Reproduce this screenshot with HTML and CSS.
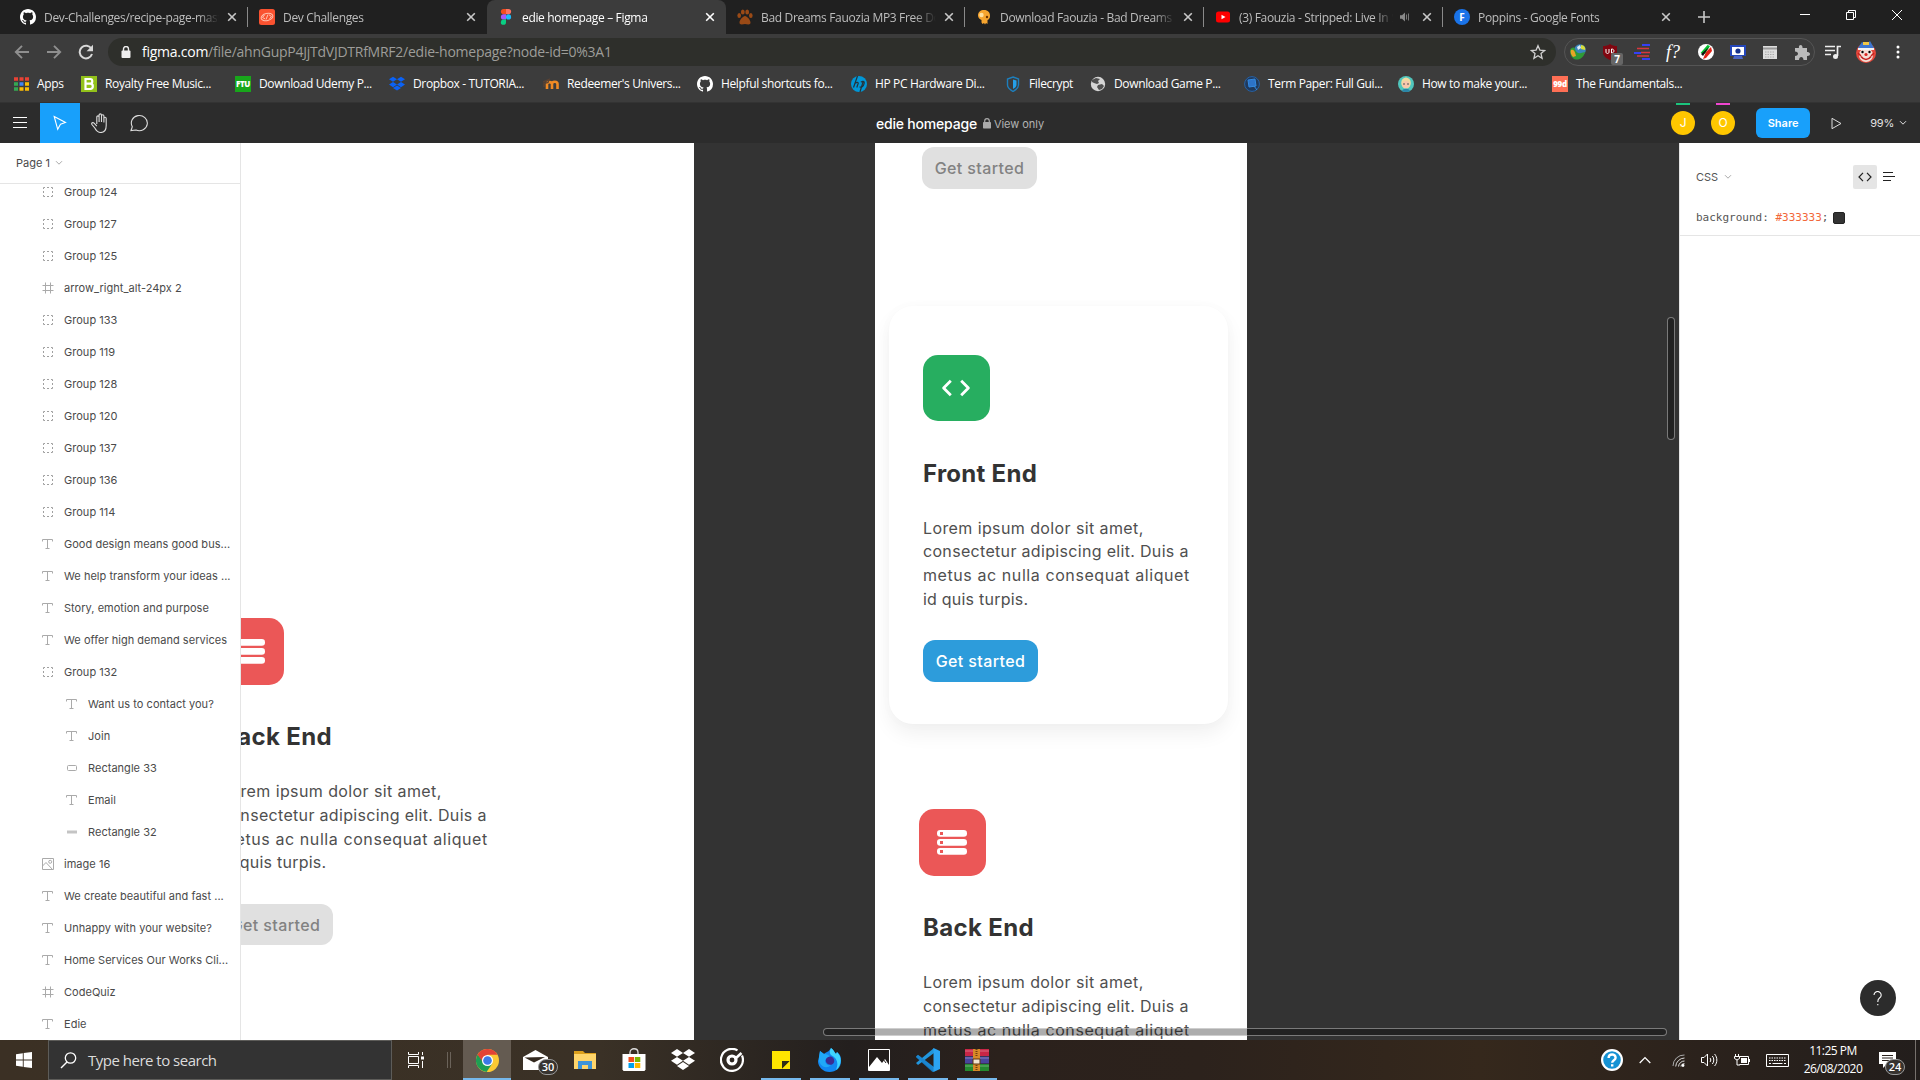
FILE: index.html
```html
<!DOCTYPE html>
<html lang="en">
<head>
<meta charset="utf-8">
<title>edie homepage – Figma</title>
<link rel="stylesheet" href="styles.css">
</head>
<body>
<svg class="defs" width="0" height="0" aria-hidden="true">
  <symbol id="x" viewBox="0 0 10 10"><path d="M1.2 1.2l7.6 7.6M8.8 1.2L1.2 8.8" fill="none" stroke="currentColor" stroke-width="1.6"/></symbol>
  <symbol id="github" viewBox="0 0 16 16"><path fill="#fff" d="M8 0C3.58 0 0 3.58 0 8c0 3.54 2.29 6.53 5.47 7.59.4.07.55-.17.55-.38v-1.49c-2.01.37-2.53-.49-2.69-.94-.09-.23-.48-.94-.82-1.13-.28-.15-.68-.52-.01-.53.63-.01 1.08.58 1.23.82.72 1.21 1.87.87 2.33.66.07-.52.28-.87.51-1.07-1.78-.2-3.64-.89-3.64-3.95 0-.87.31-1.59.82-2.15-.08-.2-.36-1.02.08-2.12 0 0 .67-.21 2.2.82.64-.18 1.32-.27 2-.27s1.36.09 2 .27c1.53-1.04 2.2-.82 2.2-.82.44 1.1.16 1.92.08 2.12.51.56.82 1.27.82 2.15 0 3.07-1.87 3.75-3.65 3.95.29.25.54.73.54 1.48v2.2c0 .21.15.46.55.38A8 8 0 0 0 16 8c0-4.42-3.58-8-8-8z"/></symbol>
  <symbol id="dropbox" viewBox="0 0 24 22"><path fill="currentColor" d="M6 0l6 3.9-6 3.9-6-3.9zM18 0l6 3.9-6 3.9-6-3.9zM6 7.9l6 3.9-6 3.9-6-3.9zM18 7.9l6 3.9-6 3.9-6-3.9zM6 17l6-3.9L18 17l-6 3.9z"/></symbol>
  <symbol id="group" viewBox="0 0 12 12"><path d="M1.500 3v-1.500h1.500M9 1.500h1.500v1.500M10.500 9v1.500h-1.500M3 10.500h-1.500v-1.500M5 1.500h2M5 10.500h2M1.500 5v2M10.500 5v2" fill="none" stroke="#a0a0a0"/></symbol>
  <symbol id="text" viewBox="0 0 12 12"><path d="M.5 3.500v-2h10v2M5.500 1.500v9M3.500 10.500h4" fill="none" stroke="#aaa"/></symbol>
  <symbol id="frame" viewBox="0 0 12 12"><path d="M3.500.5v11M8.500.5v11M.5 3.500h11M.5 8.500h11" fill="none" stroke="#aaa"/></symbol>
  <symbol id="rect" viewBox="0 0 12 12"><rect x="1.500" y="3.500" width="9" height="5" rx="1" fill="none" stroke="#aaa"/></symbol>
  <symbol id="bar" viewBox="0 0 12 12"><path d="M1 6h10" stroke="#c4c4c4" stroke-width="3"/></symbol>
  <symbol id="image" viewBox="0 0 12 12"><path d="M.5.500h11v11H.5zM.5 8l3.500-3.500 6.500 7" fill="none" stroke="#aaa"/><circle cx="8.200" cy="3.800" r="1.500" fill="none" stroke="#aaa"/></symbol>
  <symbol id="chev" viewBox="0 0 8 6"><path d="M1 1.200l3 3 3-3" fill="none" stroke="currentColor"/></symbol>
  <symbol id="server" viewBox="0 0 30 25"><g fill="#fff"><rect width="30" height="6.800" rx="3.200"/><rect y="9" width="30" height="6.800" rx="3.200"/><rect y="18" width="30" height="6.800" rx="3.200"/></g><path fill="#eb5757" d="M3 1.900h3v3H3zM3 10.900h3v3H3zM3 19.900h3v3H3z"/></symbol>
</svg>

<header class="tabs">
  <div class="tab"><svg class="fav"><use href="#github"/></svg><span class="tab-title">Dev-Challenges/recipe-page-master</span><svg class="close"><use href="#x"/></svg></div>
  <div class="tab sep"><svg class="fav" viewBox="0 0 16 16"><rect width="16" height="16" rx="2.500" fill="#fa5230"/><g fill="none" stroke="#ffc2b0"><ellipse cx="8" cy="8" rx="6" ry="3.600" transform="rotate(-14 8 8)"/><path d="M5.500 6L3.500 8.500l2.500 1.300M10 5.800l2.500 1.700-2 2.200M9 5.500l-2 5"/></g></svg><span class="tab-title">Dev Challenges</span><svg class="close"><use href="#x"/></svg></div>
  <div class="tab active"><svg class="fav" viewBox="0 0 16 16"><path d="M5.500 0H8v5.200H5.500a2.600 2.600 0 0 1 0-5.200z" fill="#f24e1e"/><path d="M8 0h2.500a2.600 2.600 0 0 1 0 5.200H8z" fill="#ff7262"/><path d="M5.500 5.300H8v5.200H5.500a2.600 2.600 0 0 1 0-5.200z" fill="#a259ff"/><circle cx="10.500" cy="7.900" r="2.600" fill="#1abcfe"/><path d="M5.500 10.600H8v2.600a2.600 2.600 0 1 1-2.500-2.600z" fill="#0acf83"/></svg><span class="tab-title">edie homepage – Figma</span><svg class="close"><use href="#x"/></svg></div>
  <div class="tab"><svg class="fav" viewBox="0 0 16 16" fill="#9a4a16"><ellipse cx="2.200" cy="6.500" rx="1.800" ry="2.500"/><ellipse cx="5.800" cy="3" rx="1.900" ry="2.600"/><ellipse cx="10.200" cy="3" rx="1.900" ry="2.600"/><ellipse cx="13.800" cy="6.500" rx="1.800" ry="2.500"/><path d="M8 7c2 0 5.500 4 5.500 6.500 0 3-3.500 1.500-5.500 1.500s-5.500 1.500-5.500-1.500C2.500 11 6 7 8 7z"/></svg><span class="tab-title">Bad Dreams Fauozia MP3 Free Download</span><svg class="close"><use href="#x"/></svg></div>
  <div class="tab sep"><svg class="fav" viewBox="0 0 16 16"><path d="M8 1c4 0 6 2.500 6 6 0 2-1 3.500-2.500 4V15l-1.500-1-1 1.500-1-1.500-1.500 1-1-1.500V11C3.500 10 2 9 2 6.500 2 3 4.500 1 8 1z" fill="#f7a52f"/><circle cx="5.500" cy="6" r="2.200" fill="#ffe0a0"/><circle cx="11" cy="8" r="1.200" fill="#6b3300"/></svg><span class="tab-title">Download Faouzia - Bad Dreams mp3</span><svg class="close"><use href="#x"/></svg></div>
  <div class="tab sep"><svg class="fav" viewBox="0 0 16 16"><rect x="1" y="2.500" width="14" height="11" rx="2.500" fill="#f00"/><path d="M6.500 5.700v4.600l4-2.300z" fill="#fff"/></svg><span class="tab-title">(3) Faouzia - Stripped: Live In Studio</span><svg class="audio" viewBox="0 0 10 10"><path d="M0 3.200h2L5 .5v9L2 6.800H0z" fill="#888"/><path d="M6.500 2.500v5M8.500 1.500v7" stroke="#777"/></svg><svg class="close"><use href="#x"/></svg></div>
  <div class="tab sep"><svg class="fav" viewBox="0 0 16 16"><circle cx="8" cy="8" r="8" fill="#1a73e8"/><text x="5.200" y="11.800" class="fav-f">F</text></svg><span class="tab-title">Poppins - Google Fonts</span><svg class="close"><use href="#x"/></svg></div>
  <svg class="plus" viewBox="0 0 12 12"><path d="M6 0v12M0 6h12" stroke="#c8c8c8" stroke-width="1.600"/></svg>
  <div class="window">
    <svg width="10" height="10"><path d="M0 4.500h10" stroke="#fff"/></svg>
    <svg width="10" height="10"><path d="M.5 2.500h7v7h-7zM2.500 2.500v-2h7v7h-2" fill="none" stroke="#fff"/></svg>
    <svg width="10" height="10"><path d="M0 0l10 10M10 0L0 10" stroke="#fff"/></svg>
  </div>
</header>

<div class="toolbar">
  <div class="nav">
    <svg viewBox="0 0 16 16" class="dim"><path d="M15 8H2M8 1.800L1.800 8 8 14.200" fill="none" stroke="currentColor" stroke-width="1.900"/></svg>
    <svg viewBox="0 0 16 16" class="dim"><path d="M1 8h13M8 1.800L14.200 8 8 14.200" fill="none" stroke="currentColor" stroke-width="1.900"/></svg>
    <svg viewBox="0 0 16 16"><path d="M13.500 5A6.300 6.300 0 1 0 14 10" fill="none" stroke="#d8d8d8" stroke-width="2"/><path d="M15 .8v6.400H8.600z" fill="#d8d8d8"/></svg>
  </div>
  <div class="address">
    <svg class="lock" viewBox="0 0 10 12"><rect x=".5" y="4.500" width="9" height="7.500" rx="1" fill="#eee"/><path d="M2.500 5V3a2.500 2.500 0 0 1 5 0v2" fill="none" stroke="#eee" stroke-width="1.400"/></svg>
    <span class="url"><b>figma.com</b>/file/ahnGupP4JjTdVJDTRfMRF2/edie-homepage?node-id=0%3A1</span>
    <svg class="star" viewBox="0 0 16 16"><path d="M8 1.700l1.900 4.400 4.700.4-3.600 3.100 1.100 4.700L8 11.800l-4.100 2.500L5 9.600 1.400 6.500l4.700-.4z" fill="none" stroke="#d0d0d0" stroke-width="1.300"/></svg>
  </div>
  <div class="exts">
    <svg viewBox="0 0 16 16"><circle cx="10" cy="6" r="5.800" fill="#3985bd"/><path d="M11 1c3 0 5 3 4 5l-4-1z" fill="#d8dd3a"/><path d="M0 6c2-3 4-3 5-1 1 3 3 5 6 4l4-1c-1 5-5 8-9 7.500C2 15 0 11 0 6z" fill="#2f9a36"/><path d="M1 6c3-1 4 2 5 6l-3 1C1 11 0 8 1 6z" fill="#e8a526"/><path d="M7 3l3-2 1 3-3 2z" fill="#dceaf5"/></svg>
    <div class="shield-ext"><svg viewBox="0 0 16 16"><path d="M8 0c2 1.500 4 2 7 2v6c0 4-3 6-7 8-4-2-7-4-7-8V2c3 0 5-.5 7-2z" fill="#800610"/><path d="M4 5v3c0 2 3 2 3 0V5M9.500 5v4c3 0 3.500-4 0-4z" fill="none" stroke="#fff"/></svg><span>7</span></div>
    <svg viewBox="0 0 16 16"><path d="M8 1h8M0 9h7M8 15h8" stroke="#3440f5" stroke-width="2"/><path d="M3 4.500h12M7 8.500h9M3 12h12" stroke="#d8373f" stroke-width="1.600"/></svg>
    <i class="fq">f?</i>
    <svg viewBox="0 0 16 16"><circle cx="8" cy="8" r="8" fill="#fff"/><path d="M2.500 9l7-8 2.500 1-5 8z" fill="#00c02c"/><path d="M8 8l5-5 1 4-6 7-3 1z" fill="#e12317"/><path d="M3 10l8-7-6 9z" fill="#111"/></svg>
    <svg viewBox="0 0 16 16"><path fill="#2446ba" d="M0 1h16v11H0z"/><path fill="#fff" d="M2 3h12v8H2z"/><circle cx="8" cy="7" r="2.600" fill="#17328c"/><path fill="#4b65c4" d="M4 12h8l1 3H3z"/></svg>
    <svg viewBox="0 0 16 16"><path fill="#ddd" d="M1 2h14v13H1z"/><path d="M1 4.500h14" stroke="#999" stroke-width="2"/><path d="M3 8h10M3 10.500h10M3 13h10" stroke="#aaa" stroke-dasharray="1.500 1"/></svg>
    <svg viewBox="0 0 16 16"><path fill="#bbb" d="M1 4h4c-1-4 4-4 3.500 0H13v4c4-.5 4 4.500 0 4v4H9.500c0-4-4.500-4-4.500 0H1v-4c4 0 4-4.500 0-4.500z"/></svg>
  </div>
  <svg class="queue" viewBox="0 0 16 16"><path d="M0 2.500h10M0 6.500h10M0 10.500h6M12.500 12V2.500H16" fill="none" stroke="#eee" stroke-width="1.700"/><circle cx="10.500" cy="12.500" r="2.500" fill="#eee"/></svg>
  <svg class="face" viewBox="0 0 22 22"><circle cx="11" cy="12" r="10" fill="#e4473b"/><ellipse cx="11" cy="14" rx="7" ry="7" fill="#f4dfd5"/><path d="M3 7l4-6 4 3 4-4 4 7z" fill="#3e76cf"/><path d="M8 1h6v3H8z" fill="#f2c744"/><path d="M3 8h16" stroke="#f3f3f3" stroke-width="2"/><circle cx="7.500" cy="11" r="1.200"/><circle cx="14.500" cy="11" r="1.200"/><circle cx="11" cy="13.500" r="1.600" fill="#d92620"/><path d="M6 15.500c3 4 7 4 10 0M3 12l3 3M19 12l-3 3" fill="none" stroke="#c4201d" stroke-width="1.500"/></svg>
  <svg class="dots" viewBox="0 0 4 16"><g fill="#fff"><circle cx="2" cy="3" r="1.500"/><circle cx="2" cy="8" r="1.500"/><circle cx="2" cy="13" r="1.500"/></g></svg>
</div>

<nav class="bookmarks">
  <div class="bm apps"><svg viewBox="0 0 16 16"><path d="M1 3h4M6.500 3h4M12 3h4" stroke="#e94235" stroke-width="3.500"/><path d="M1 8h4" stroke="#34a853" stroke-width="3.500"/><path d="M6.500 8h4" stroke="#4285f4" stroke-width="3.500"/><path d="M12 8h4M12 13h4M6.500 13h4" stroke="#fbbc05" stroke-width="3.500"/><path d="M1 13h4" stroke="#34a853" stroke-width="3.500"/></svg><span>Apps</span></div>
  <div class="bm"><svg viewBox="0 0 16 16"><rect width="16" height="16" fill="#93c21b"/><path d="M4.500 3h4.700c2.800 0 2.800 4.500 0 4.700 3.500 0 3.500 5.300 0 5.300H4.500zM4.500 7.700h5" fill="none" stroke="#fff" stroke-width="2.200"/></svg><span>Royalty Free Music...</span></div>
  <div class="bm"><svg viewBox="0 0 16 16"><rect width="16" height="16" fill="#18a61b"/><text x="8" y="11.200" class="ftu">FTU</text></svg><span>Download Udemy P...</span></div>
  <div class="bm blue"><svg><use href="#dropbox"/></svg><span>Dropbox - TUTORIA...</span></div>
  <div class="bm"><svg viewBox="0 0 16 16"><path d="M4 13V8c0-2.500 5-2.500 5 0v5M9 8c0-3 5.500-3 5.500 0v5" fill="none" stroke="#f08a24" stroke-width="2.600"/><path d="M0 6l6-2.500-1 3-4 1V11" fill="none" stroke="#5c4333" stroke-width="1.400"/></svg><span>Redeemer's Univers...</span></div>
  <div class="bm"><svg><use href="#github"/></svg><span>Helpful shortcuts fo...</span></div>
  <div class="bm"><svg viewBox="0 0 16 16"><circle cx="8" cy="8" r="8" fill="#0096d6"/><path d="M6.500 0L2.500 11.500M3.800 7.500c3-2 4-1 3 1l-1 3M12.300 5L9 16M9.800 6c2.500-1 4-1 3.200 1.800-1 3.500-2 3.500-4.500 3.200" fill="none" stroke="#25333a" stroke-width="1.200"/></svg><span>HP PC Hardware Di...</span></div>
  <div class="bm short"><svg viewBox="0 0 16 16"><path d="M8 1l5.500 2v6c0 3-3 5-5.500 6.500C5.500 14 2.500 12 2.500 9V3z" fill="none" stroke="#1d7fbd" stroke-width="1.400"/><path d="M8 3.500l3.500 1V9c0 2-2 3-3.500 4z" fill="#26a0e8"/></svg><span>Filecrypt</span></div>
  <div class="bm"><svg viewBox="0 0 16 16"><circle cx="8" cy="8" r="7.200" fill="#d4d4d4"/><path d="M2 4l4-2 4 1-2 2 1 2-2 1-3-1-2-1zM8 9l4-1 2 2-2 3-3 1-2-3z" fill="#4f4f4f"/></svg><span>Download Game P...</span></div>
  <div class="bm"><svg viewBox="0 0 16 16"><circle cx="8" cy="8" r="7.400" fill="#20395c" stroke="#2762a5"/><path d="M4 4l7-1 1 7-7 1zM10 10l3 4" fill="#2d73c8" stroke="#338ae0"/></svg><span>Term Paper: Full Gui...</span></div>
  <div class="bm"><svg viewBox="0 0 16 16"><circle cx="8" cy="8" r="8" fill="#50c6bd"/><ellipse cx="8" cy="7" rx="4.800" ry="5.500" fill="#f1d9a1"/><circle cx="8" cy="8.500" r="3.500" fill="#f8c7ae"/><path d="M4 15c1-3 7-3 8 0-2 1.300-6 1.300-8 0z" fill="#2b85a8"/><path d="M5 8h2M9 8h2" stroke="#555"/></svg><span>How to make your...</span></div>
  <div class="bm"><svg viewBox="0 0 16 16"><rect width="16" height="16" fill="#fe6f55"/><text x="8" y="11.200" class="ftu">99d</text></svg><span>The Fundamentals...</span></div>
</nav>

<div class="figbar">
  <div class="tools">
    <div class="tool"><svg width="14" height="12"><path d="M0 .5h14M0 5.500h14M0 10.500h14" stroke="#fff"/></svg></div>
    <div class="tool on"><svg width="14" height="16"><path d="M1.200 1.500l11.300 6-5 1.800-2.800 5z" fill="none" stroke="#fff" stroke-width="1.100"/></svg></div>
    <div class="tool"><svg width="20" height="20" viewBox="0 0 20 20"><path d="M6.500 11V4.200c0-1.800 2.300-1.800 2.300 0V9 2.200c0-1.800 2.400-1.800 2.400 0V9 3c0-1.700 2.400-1.700 2.400 0v6.500V5.500c0-1.600 2.300-1.600 2.300 0V12.500c0 4-1.500 7-5.400 7-3.500 0-4.700-2-6-4.500L1.600 11.500c-.8-1.700 1-2.500 2.200-1.300l2.700 3" transform="translate(.3 0)" fill="none" stroke="#ddd" stroke-width="1.100"/></svg></div>
    <div class="tool comment"><svg width="18" height="18"><path d="M1 16.500l1.300-3.800A8 7.600 0 1 1 6 16z" fill="none" stroke="#ddd" stroke-width="1.100"/></svg></div>
  </div>
  <div class="doc"><span class="doc-name">edie homepage</span><svg width="8" height="11"><rect x="0" y="4" width="8" height="6.500" rx=".7" fill="#aaa"/><path d="M1.700 5V3a2.300 2.300 0 0 1 4.600 0v2" fill="none" stroke="#aaa" stroke-width="1.200"/></svg><span class="view">View only</span></div>
  <div class="actions">
    <div class="person green"><span>J</span></div>
    <div class="person pink"><span>O</span></div>
    <div class="share">Share</div>
    <svg class="play" width="11" height="13"><path d="M1 1.300l9 5.200-9 5.200z" fill="none" stroke="#ddd"/></svg>
    <span class="zoom">99%</span><svg class="zchev"><use href="#chev"/></svg>
  </div>
</div>

<main class="work">
  <aside class="layers">
    <div class="page">Page 1 <svg><use href="#chev"/></svg></div>
    <div class="list">
      <div class="row"><svg><use href="#group"/></svg>Group 124</div>
      <div class="row"><svg><use href="#group"/></svg>Group 127</div>
      <div class="row"><svg><use href="#group"/></svg>Group 125</div>
      <div class="row"><svg><use href="#frame"/></svg>arrow_right_alt-24px 2</div>
      <div class="row"><svg><use href="#group"/></svg>Group 133</div>
      <div class="row"><svg><use href="#group"/></svg>Group 119</div>
      <div class="row"><svg><use href="#group"/></svg>Group 128</div>
      <div class="row"><svg><use href="#group"/></svg>Group 120</div>
      <div class="row"><svg><use href="#group"/></svg>Group 137</div>
      <div class="row"><svg><use href="#group"/></svg>Group 136</div>
      <div class="row"><svg><use href="#group"/></svg>Group 114</div>
      <div class="row"><svg><use href="#text"/></svg>Good design means good bus...</div>
      <div class="row"><svg><use href="#text"/></svg>We help transform your ideas ...</div>
      <div class="row"><svg><use href="#text"/></svg>Story, emotion and purpose</div>
      <div class="row"><svg><use href="#text"/></svg>We offer high demand services</div>
      <div class="row"><svg><use href="#group"/></svg>Group 132</div>
      <div class="row child"><svg><use href="#text"/></svg>Want us to contact you?</div>
      <div class="row child"><svg><use href="#text"/></svg>Join</div>
      <div class="row child"><svg><use href="#rect"/></svg>Rectangle 33</div>
      <div class="row child"><svg><use href="#text"/></svg>Email</div>
      <div class="row child"><svg><use href="#bar"/></svg>Rectangle 32</div>
      <div class="row"><svg><use href="#image"/></svg>image 16</div>
      <div class="row"><svg><use href="#text"/></svg>We create beautiful and fast ...</div>
      <div class="row"><svg><use href="#text"/></svg>Unhappy with your website?</div>
      <div class="row"><svg><use href="#text"/></svg>Home Services Our Works Cli...</div>
      <div class="row"><svg><use href="#frame"/></svg>CodeQuiz</div>
      <div class="row"><svg><use href="#text"/></svg>Edie</div>
    </div>
  </aside>

  <section class="canvas">
    <div class="artboard desktop">
      <div class="service desk-back">
        <div class="tile red"><svg width="30" height="25"><use href="#server"/></svg></div>
        <h2 class="back">Back End</h2>
        <p><span class="l1">Lorem ipsum dolor sit amet,</span><br><span class="l2">consectetur adipiscing elit. Duis a</span><br><span class="l3">metus ac nulla consequat aliquet</span><br><span class="l4">id quis turpis.</span></p>
        <div class="btn grey shift">Get started</div>
      </div>
    </div>
    <div class="artboard mobile">
      <div class="btn grey top-btn">Get started</div>
      <div class="card"></div>
      <div class="service mob-front">
        <div class="tile green"><svg width="30" height="18" viewBox="0 0 30 18"><path d="M9.800 1.800L2.600 9l7.200 7.200M20.200 1.800L27.400 9l-7.200 7.200" fill="none" stroke="#fff" stroke-width="2.800" stroke-linejoin="round"/></svg></div>
        <h2>Front End</h2>
        <p><span class="l1">Lorem ipsum dolor sit amet,</span><br><span class="l2">consectetur adipiscing elit. Duis a</span><br><span class="l3">metus ac nulla consequat aliquet</span><br><span class="l4">id quis turpis.</span></p>
        <div class="btn blue-btn">Get started</div>
      </div>
      <div class="service mob-back">
        <div class="tile red"><svg width="30" height="25"><use href="#server"/></svg></div>
        <h2 class="back">Back End</h2>
        <p><span class="l1">Lorem ipsum dolor sit amet,</span><br><span class="l2">consectetur adipiscing elit. Duis a</span><br><span class="l3">metus ac nulla consequat aliquet</span></p>
      </div>
    </div>
    <div class="scroll vert"></div>
    <div class="scroll horiz"></div>
  </section>

  <aside class="inspect">
    <div class="code-head"><span>CSS</span><svg class="cchev"><use href="#chev"/></svg>
      <div class="code-on"><svg width="14" height="10"><path d="M5 .8L1 5l4 4.200M9 .8L13 5 9 9.200" fill="none" stroke="#222" stroke-width="1.200"/></svg></div>
      <svg class="table" width="12" height="10"><path d="M0 .5h10M0 4.500h12M0 8.500h8" stroke="#222"/></svg>
    </div>
    <div class="code"><span>background: <em>#333333</em>;</span><i></i></div>
    <div class="help"><svg width="10" height="15"><path d="M1 4a3.600 3.500 0 1 1 5.500 3C5.300 7.800 4.800 8.500 4.800 11M4.800 13v1.300" fill="none" stroke="#fff" stroke-width="1.100"/></svg></div>
  </aside>
</main>

<footer class="taskbar">
  <div class="start"><svg width="16" height="16"><path fill="#fff" d="M0 2.300L6.800 1.300v6.300H0zM7.700 1.100L16 0v7.600H7.700zM0 8.500h6.800v6.300L0 13.800zM7.700 8.500H16V16l-8.300-1.100z"/></svg></div>
  <div class="search"><svg width="17" height="17"><circle cx="10.500" cy="6" r="5.200" fill="none" stroke="#fff" stroke-width="1.300"/><path d="M7 10L1 16" stroke="#fff" stroke-width="1.400"/></svg><span>Type here to search</span></div>
  <div class="taskview"><svg width="17" height="16"><path d="M.5 0v2.500h10V0M.5 4.500h10v7H.5zM.5 16v-2.500h10V16M14.500 0v3M14.500 9v7" fill="none" stroke="#fff"/><path d="M13 4.500h3v3h-3z" fill="#fff"/></svg></div>
  <div class="grip"></div>
  <div class="app current"><svg width="23" height="23" viewBox="0 0 24 24"><circle cx="12" cy="12" r="12" fill="#fcc934"/><path d="M12 12L1.600 6A12 12 0 0 0 11 24l6-9z" fill="#1e9e54"/><path d="M1.600 6A12 12 0 0 1 22.400 6H12l-4.500 8z" fill="#e24336"/><circle cx="12" cy="12" r="5.800" fill="#fff"/><circle cx="12" cy="12" r="4.500" fill="#3b79e8"/></svg></div>
  <div class="app"><svg width="25" height="20"><path d="M0 7L12.500 0 25 7v13H0z" fill="#fff"/><path d="M1.500 7.500L22 7l-11 5.500z" fill="#33291f"/></svg><span class="badge mail">30</span></div>
  <div class="app"><svg width="22" height="18"><path d="M0 0h9l2 2h11v16H0z" fill="#dca01d"/><path d="M0 3h22v15H0z" fill="#fed56b"/><path d="M4 18v-8h14v8h-4v-4H8v4z" fill="#3d94d9"/></svg></div>
  <div class="app"><svg width="24" height="24"><path d="M8 6V4.500c0-5 8-5 8 0V6" fill="none" stroke="#ddd" stroke-width="1.300"/><path d="M.5 6h23v15.500l-1 1.500h-21l-1-1.500z" fill="#fff"/><path fill="#f04e1f" d="M6.500 9H12v5H6.500z"/><path fill="#7db700" d="M12.800 9h5.500v5h-5.500z"/><path fill="#00a1ee" d="M6.500 15H12v5H6.500z"/><path fill="#fdb800" d="M12.800 15h5.500v5h-5.500z"/></svg></div>
  <div class="app"><svg width="24" height="22"><use href="#dropbox"/></svg></div>
  <div class="app"><svg width="24" height="24"><path d="M17.500 2.400A11 11 0 1 0 22 7.500" fill="none" stroke="#fff" stroke-width="2.200"/><circle cx="12" cy="12" r="4" fill="none" stroke="#fff" stroke-width="3.200"/><path d="M16 10l5.500-5" fill="none" stroke="#fff" stroke-width="2.600"/></svg></div>
  <div class="app run"><svg width="18" height="18"><path d="M0 0h18v18H0z" fill="#ffe500"/><path d="M10 18v-8h8z" fill="#302c16"/><path d="M18 10v8h-8z" fill="#ffe500"/></svg></div>
  <div class="app run"><svg width="23" height="24" viewBox="0 0 23 24"><path d="M1 9l1-6 4 3c2-2 5-2 7-6 3 2 3 4 5 6l1-2c4 3 4 6 4 9 0 7-5 11-11.500 11S0 19 0 13z" fill="#1287f0"/><path d="M13 0c3 2 3 4 5 6l1-2c6 6 4 14-1 18 3-7 1-12-5-15-2-2-1-5 0-7z" fill="#3fd6ff"/><path d="M1 9l1-6 4 3c3 0 5 1 6 3l-5 3c0 4 3 6 6 5-5 5-13 1-12-8z" fill="#20a9f8"/><path d="M8 11c1-2 4-3 6-2 3 2 3 6 0 7.500-4 1-7-2-6-5.500z" fill="#3b2d91"/></svg></div>
  <div class="app run"><svg width="22" height="22"><path d="M.5.500h21v21H.5z" fill="#211d1b" stroke="#fff"/><path d="M1 18l8-10 5 6 3-4 4 6v5.500H1z" fill="#fff"/><path d="M13 12l2-2 3 4" fill="none" stroke="#211d1b"/></svg></div>
  <div class="app run"><svg width="24" height="24"><path d="M18 4v16L2 7.500 0 8.800l0 .4L16.500 24 18 23z" fill="#1478bd"/><path d="M18 0L0 15l2 2L18 5z" fill="#2196dd"/><path d="M0 8.500L2 6.800 18 19v5z" fill="#1b86cf"/><path d="M17.500 0l6.500 3v18l-6.500 3z" fill="#2ba4f3"/></svg></div>
  <div class="app run"><svg width="24" height="22"><path d="M0 0h24v7H0z" fill="#c82646"/><path d="M0 7.500h24v7H0z" fill="#49449c"/><path d="M0 15h24v7H0z" fill="#248a30"/><path d="M0 2h24M0 9h24M0 17h24" stroke="#ffffff55"/><path d="M8 0h7v22H8z" fill="#d78a28"/><path d="M8 10h7v5H8z" fill="#f2e4cf" stroke="#5a3410"/><path d="M11.500 0v8M11.500 16v6" stroke="#703f10" stroke-dasharray="1 1" stroke-width="2"/></svg></div>
  <div class="tray">
    <svg class="t-help" width="22" height="22"><circle cx="11" cy="11" r="9.900" fill="#1592d4" stroke="#fff" stroke-width="2.200"/><path d="M7.600 9c0-4.600 7-4.600 7-.3 0 2.500-3.400 2.500-3.400 5M11.200 15.200v2.300" fill="none" stroke="#fff" stroke-width="2.400"/></svg>
    <svg class="t-up" width="12" height="8"><path d="M.7 7L6 1.600 11.300 7" fill="none" stroke="#fff" stroke-width="1.300"/></svg>
    <svg class="t-wifi" width="13" height="13"><g fill="none" stroke="#ddd"><path d="M1 12A11 11 0 0 1 12.500 1" stroke="#aaa"/><path d="M3.700 12.500A9 9 0 0 1 12.500 4M6.500 12.500a6 6 0 0 1 6-5.500M9 12.500a3 3 0 0 1 3.500-2.800"/></g><circle cx="11" cy="11.500" r="1.400" fill="#fff"/></svg>
    <svg class="t-vol" width="17" height="14"><path d="M.5 4.500H3L6.500 1v12L3 9.500H.5zM9 5c1 1 1 3 0 4M11.300 3c2 2 2 6 0 8M13.600 1c3 3.500 3 8.500 0 12" fill="none" stroke="#fff"/></svg>
    <svg class="t-bat" width="16" height="12"><path d="M5.500 2.500h9v8h-9" fill="none" stroke="#fff"/><path d="M7 4h6v5H7zM14.500 5H16v3h-1.500z" fill="#fff"/><path d="M1.500 0v2.500M4.500 0v2.500M.5 2.500h5v2L3 6 .5 4.500zM3 6v5h3" fill="none" stroke="#fff"/></svg>
    <svg class="t-key" width="23" height="13"><path d="M.5.500h22v12H.5z" fill="none" stroke="#fff"/><path d="M3 4h17M3 6.500h17" stroke="#fff" stroke-dasharray="1.500 1"/><path d="M3 9.500h2M6.500 9.500h10M18 9.500h2" stroke="#fff"/></svg>
    <div class="clock"><div class="time">11:25 PM</div><div>26/08/2020</div></div>
    <div class="notice"><svg width="17" height="16"><path d="M0 0h17v12H8l-4 4v-4H0z" fill="#fff"/><path d="M3 3.500h11M3 6h11M3 8.500h7" stroke="#2b231e"/></svg><span class="badge">24</span></div>
  </div>
</footer>
</body>
</html>
```
FILE: styles.css
```css
* { box-sizing: border-box; }
body { margin: 0; width: 1920px; height: 1080px; overflow: hidden; display: flex; flex-direction: column; font-family: "Open Sans", "Noto Sans", sans-serif; font-size: 12px; color: #fff; background: #333; }
svg { flex: none; display: block; }
.defs { position: absolute; }

/* Browser tabs */
.tabs { height: 34px; flex: none; display: flex; background: #202020; padding-left: 9px; }
.tab { width: 239px; flex: none; display: flex; align-items: center; padding: 0 11px 0 11px; color: #bdbdbd; position: relative; letter-spacing: -.33px; }
.tab.sep::before { content: ""; position: absolute; left: -1px; top: 7px; width: 1px; height: 20px; background: #8a8a8a; }
.tab.active { background: #3c3c3c; color: #fff; border-radius: 8px 8px 0 0; }
.tab .fav { width: 16px; height: 16px; margin-right: 8px; }
.tab-title { flex: 1; white-space: nowrap; overflow: hidden; margin-right: 8px; -webkit-mask-image: linear-gradient(90deg, #000 88%, transparent); mask-image: linear-gradient(90deg, #000 88%, transparent); }
.close { width: 10px; height: 10px; color: #c8c8c8; }
.active .close { color: #fff; }
.audio { width: 10px; height: 10px; margin: 0 12px 0 -1px; }
.fav-f { font: 700 10px "Open Sans", sans-serif; fill: #fff; }
.plus { width: 12px; height: 12px; margin: 11px 0 0 16px; }
.window { margin-left: auto; display: flex; gap: 36px; padding: 10px 18px 0 0; }

/* Address bar */
.toolbar { height: 35px; flex: none; background: #3c3c3c; display: flex; align-items: center; padding-left: 14px; }
.nav { display: flex; gap: 16px; width: 94px; }
.nav svg { width: 16px; height: 16px; }
.dim { color: #8f8f8f; }
.address { width: 1448px; height: 28px; border-radius: 14px; background: #2e2f2b; display: flex; align-items: center; padding: 0 10px 0 13px; }
.lock { width: 10px; height: 12px; margin-right: 11px; }
.url { font-size: 14px; letter-spacing: -.25px; color: #9d9d99; }
.url b { font-weight: 400; color: #fff; }
.star { width: 16px; height: 16px; margin-left: auto; }
.exts { width: 251px; height: 28px; margin-left: 8px; border: 1px solid #555; border-radius: 14px; display: flex; align-items: center; gap: 16px; padding-left: 5px; }
.exts svg { width: 16px; height: 16px; }
.shield-ext { position: relative; }
.shield-ext span { position: absolute; left: 9px; top: 9px; width: 12px; height: 12px; border-radius: 2px; background: #666; font: 700 10px/12px "Open Sans", sans-serif; text-align: center; }
.fq { width: 16px; font: italic 18px/20px "Liberation Serif", serif; white-space: nowrap; }
.queue { width: 16px; height: 16px; margin-left: 10px; }
.face { width: 22px; height: 22px; margin-left: 14px; }
.dots { width: 4px; height: 16px; margin-left: 19px; }

/* Bookmarks */
.bookmarks { height: 34px; flex: none; background: #3c3c3c; display: flex; align-items: center; padding: 0 0 4px 13px; border-bottom: 1px solid #333; }
.bm { width: 154px; flex: none; display: flex; align-items: center; gap: 8px; white-space: nowrap; letter-spacing: -.36px; }
.bm.apps { width: 68px; }
.bm.short { width: 85px; }
.bm svg { width: 16px; height: 16px; }
.blue svg { color: #0b62f5; }
.ftu { font: 800 8px "Open Sans", sans-serif; fill: #fff; text-anchor: middle; }

/* Editor header */
.figbar { height: 40px; flex: none; background: #2c2c2c; display: grid; grid-template-columns: 1fr auto 1fr; font-family: Inter, sans-serif; font-size: 11px; }
.tools { display: flex; }
.tool { width: 40px; height: 40px; display: flex; align-items: center; justify-content: center; }
.tool.on { background: #18a0fb; }
.tool.comment { padding-right: 2px; }
.doc { display: flex; align-items: center; }
.doc-name { font-size: 14px; font-weight: 500; letter-spacing: -.2px; margin-right: 6px; }
.doc svg { margin-top: 1px; }
.view { color: #b3b3b3; margin: 1px 0 0 3px; letter-spacing: -.05px; }
.actions { display: flex; align-items: center; justify-content: flex-end; padding-right: 13px; }
.person { width: 40px; height: 40px; display: flex; align-items: center; justify-content: center; position: relative; }
.person span { width: 24px; height: 24px; border-radius: 50%; background: #ffc700; text-align: center; line-height: 24px; font-size: 12px; }
.person::before { content: ""; position: absolute; top: 0; left: 13px; width: 14px; height: 2px; }
.green::before { background: #1bc47d; }
.pink::before { background: #ef46d0; }
.share { width: 54px; height: 30px; border-radius: 6px; margin-left: 13px; background: #18a0fb; font-weight: 600; text-align: center; line-height: 30px; }
.play { margin: 0 28px 0 21px; }
.zoom { color: #e2e2e2; letter-spacing: -.2px; }
.zchev { width: 8px; height: 6px; margin-left: 5px; color: #e2e2e2; }

/* Layers panel */
.work { flex: 1; display: flex; min-height: 0; font-family: Inter, sans-serif; }
.layers { width: 241px; background: #fff; border-right: 1px solid #e5e5e5; color: #4a4a4a; font-size: 11px; display: flex; flex-direction: column; letter-spacing: .03px; }
.page { height: 41px; flex: none; border-bottom: 1px solid #e5e5e5; display: flex; align-items: center; padding-left: 16px; gap: 5px; }
.page svg { width: 8px; height: 6px; color: #aaa; }
.list { flex: 1; overflow: hidden; display: flex; flex-direction: column; }
.row { height: 32px; flex: none; display: flex; align-items: center; gap: 10px; padding-left: 42px; white-space: nowrap; }
.row:first-child { margin-top: -8px; }
.row.child { padding-left: 66px; }
.row svg { width: 12px; height: 12px; }

/* Canvas */
.canvas { flex: 1; position: relative; overflow: hidden; background: #333; }
.artboard { position: absolute; top: 0; bottom: 0; background: #fff; overflow: hidden; }
.desktop { left: 0; width: 453px; }
.mobile { left: 634px; width: 371.500px; }
.card { position: absolute; left: 14px; top: 162.500px; width: 339px; height: 418.500px; border-radius: 24px; background: #fff; box-shadow: 0 10px 20px rgba(0,0,0,.06), 0 0 14px rgba(0,0,0,.02); }
.service { position: absolute; width: 290px; display: flex; flex-direction: column; align-items: flex-start; }
.desk-back { left: -20px; top: 475px; }
.mob-front { left: 48px; top: 211.500px; }
.mob-back { left: 48px; top: 666.200px; }
.tile { width: 66.500px; height: 66.500px; border-radius: 15px; display: flex; align-items: center; justify-content: center; }
.red { background: #eb5757; margin-left: -4px; }
.tile.green { background: #27ae60; }
h2 { margin: 34.500px 0 0; height: 36px; font-size: 24px; line-height: 36px; font-weight: 700; letter-spacing: .28px; color: #333; white-space: nowrap; }
h2.back { letter-spacing: .35px; }
p { margin: 25px 0 0; font-size: 16px; line-height: 23.760px; color: #4f4f4f; white-space: nowrap; }
.l1 { letter-spacing: .4px; }
.l2 { letter-spacing: .32px; }
.l3 { letter-spacing: .58px; }
.l4 { letter-spacing: .22px; }
.btn { width: 115px; height: 41.500px; border-radius: 12px; font-size: 16px; line-height: 43px; font-weight: 500; text-align: center; letter-spacing: .4px; white-space: nowrap; }
.service .btn { margin-top: 28.500px; }
.grey { background: #e0e0e0; color: #828282; }
.service .shift { margin-left: -3px; }
.blue-btn { background: #2d9cdb; color: #fff; }
.top-btn { position: absolute; left: 47px; top: 4.300px; }
.scroll { position: absolute; border: 1px solid rgba(255,255,255,.4); border-radius: 4px; background: rgba(0,0,0,.32); }
.vert { right: 4px; top: 174px; width: 8px; height: 123px; }
.horiz { left: 582px; right: 12px; bottom: 4px; height: 8px; }

/* Inspect panel */
.inspect { width: 241px; background: #fff; border-left: 1px solid #e5e5e5; color: #555; font-size: 11px; position: relative; }
.code-head { display: flex; align-items: center; padding: 22px 25px 0 16px; }
.cchev { width: 8px; height: 6px; margin-left: 6px; color: #aaa; }
.code-on { width: 24px; height: 24px; margin-left: auto; border-radius: 2px; background: #e5e5e5; display: flex; align-items: center; justify-content: center; }
.table { margin-left: 6px; }
.code { height: 47px; padding: 11px 16px 0; display: flex; align-items: center; border-bottom: 1px solid #e5e5e5; font: 11px "DejaVu Sans Mono", monospace; }
.code em { font-style: normal; color: #f2673a; }
.code i { width: 12px; height: 12px; margin-left: 5px; border-radius: 2px; background: #333; border: 1px solid #222; }
.help { position: absolute; right: 24px; bottom: 24px; width: 36px; height: 36px; border-radius: 50%; background: #2c2c2c; display: flex; align-items: center; justify-content: center; }

/* Taskbar */
.taskbar { height: 40px; flex: none; display: flex; background: linear-gradient(90deg, #3b3024 0, #3a3126 600px, #231f1e 850px, #2b211c 1000px, #2c221c 1200px, #35281c 1480px, #2b221c 1700px, #231e1c 1920px); }
.start { width: 48px; display: flex; align-items: center; justify-content: center; }
.search { width: 344px; background: #333; border: 1px solid #5d5c59; display: flex; align-items: center; padding-left: 11px; gap: 11px; font-size: 15px; letter-spacing: -.5px; color: #dcdcdc; }
.taskview { width: 55px; display: flex; align-items: center; padding-left: 16px; }
.grip { width: 4px; margin: 12px 12px 12px 0; border: solid #6b635a; border-width: 0 1px; }
.app { width: 49px; flex: none; display: flex; align-items: center; justify-content: center; position: relative; left: -1px; }
.current { background: #645b51; width: 48px; margin-right: 1px; left: 0; }
.current::after, .run::after { content: ""; position: absolute; bottom: 0; left: 5px; right: 4px; height: 2px; background: #76b9ed; }
.current::after { left: 0; right: 0; }
.badge { position: absolute; width: 20px; height: 16px; border-radius: 8px; border: 1px solid #999; background: #37332f; font: 600 11px/14px "Open Sans", sans-serif; text-align: center; }
.mail { left: 27px; top: 19px; }
.tray { margin-left: auto; display: flex; align-items: center; border: 0; }
.t-up { margin-left: 16px; }
.t-wifi { margin-left: 21px; }
.t-vol { margin-left: 16px; }
.t-bat { margin-left: 16px; }
.t-key { margin-left: 16px; }
.clock { width: 60px; margin-left: 14px; text-align: center; font-size: 12px; line-height: 18px; letter-spacing: -.5px; white-space: nowrap; }
.notice { width: 42px; height: 40px; margin-left: 11px; border-right: 1px solid #77716d; padding: 12px 0 0 5px; position: relative; margin-right: 4px; }
.notice .badge { left: 11px; top: 19px; }
```
